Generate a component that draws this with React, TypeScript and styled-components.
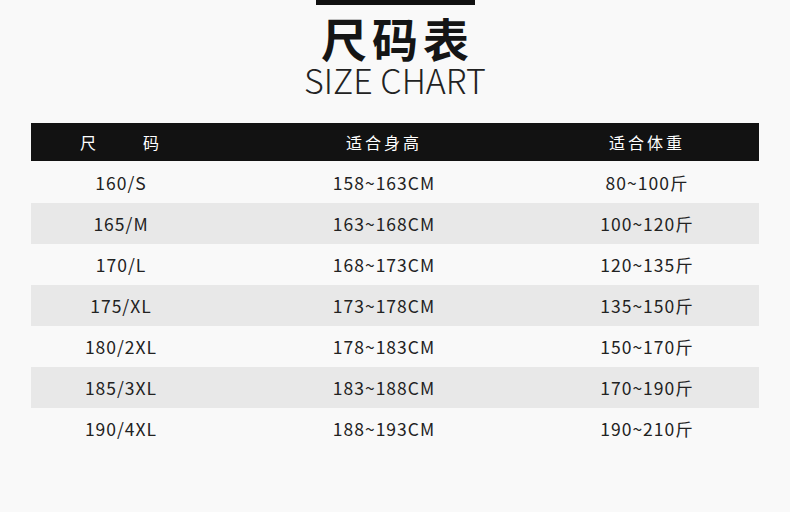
import styled, { createGlobalStyle } from 'styled-components';

const rows = [
  ['160/S', '158~163CM', '80~100斤'],
  ['165/M', '163~168CM', '100~120斤'],
  ['170/L', '168~173CM', '120~135斤'],
  ['175/XL', '173~178CM', '135~150斤'],
  ['180/2XL', '178~183CM', '150~170斤'],
  ['185/3XL', '183~188CM', '170~190斤'],
  ['190/4XL', '188~193CM', '190~210斤'],
];

export default function App() {
  return (
    <Page>
      <GlobalStyle />
      <TopBar />
      <Title>尺码表</Title>
      <SubTitle>SIZE CHART</SubTitle>
      <Table>
        <HeadRow>
          <HeadCell><Spaced>尺</Spaced><span>码</span></HeadCell>
          <HeadCell>适合身高</HeadCell>
          <HeadCell>适合体重</HeadCell>
        </HeadRow>
        {rows.map((r, i) => (
          <Row key={r[0]} $shaded={i % 2 === 1}>
            {r.map((c) => (
              <Cell key={c}>{c}</Cell>
            ))}
          </Row>
        ))}
      </Table>
    </Page>
  );
}

const GlobalStyle = createGlobalStyle`
  body {
    margin: 0;
    background: #f9f9f9;
    font-family: "Noto Sans CJK SC", "Noto Sans", sans-serif;
  }
`;

const Page = styled.div`
  width: 790px;
  height: 512px;
  display: flex;
  flex-direction: column;
  align-items: center;
  background: #f9f9f9;
  overflow: hidden;
`;

const TopBar = styled.div`
  width: 159px;
  height: 5px;
  background: #111;
  margin-left: 1px;
`;

const Title = styled.h1`
  margin: 6px 0 0;
  font-size: 46px;
  line-height: 52px;
  font-weight: 700;
  letter-spacing: 5px;
  color: #151515;
  padding-left: 5px;
`;

const SubTitle = styled.div`
  margin-top: 0;
  font-size: 34px;
  line-height: 34px;
  font-weight: 300;
  letter-spacing: 0;
  color: #222;
`;

const Table = styled.div`
  margin-top: 26px;
  width: 728px;
  display: flex;
  flex-direction: column;
`;

const HeadRow = styled.div`
  display: grid;
  grid-template-columns: 180px 346px 180px;
  height: 38px;
  align-items: center;
  background: #121212;
  margin-bottom: 1px;
`;

const HeadCell = styled.div`
  text-align: center;
  color: #fff;
  font-size: 16px;
  letter-spacing: 3px;
`;

const Spaced = styled.span`
  margin-right: 44px;
`;

const Row = styled.div<{ $shaded: boolean }>`
  display: grid;
  grid-template-columns: 180px 346px 180px;
  height: 41px;
  align-items: center;
  background: ${(p) => (p.$shaded ? '#e8e8e8' : 'transparent')};
`;

const Cell = styled.div`
  text-align: center;
  color: #222;
  font-size: 17.5px;
  letter-spacing: 1px;
`;
